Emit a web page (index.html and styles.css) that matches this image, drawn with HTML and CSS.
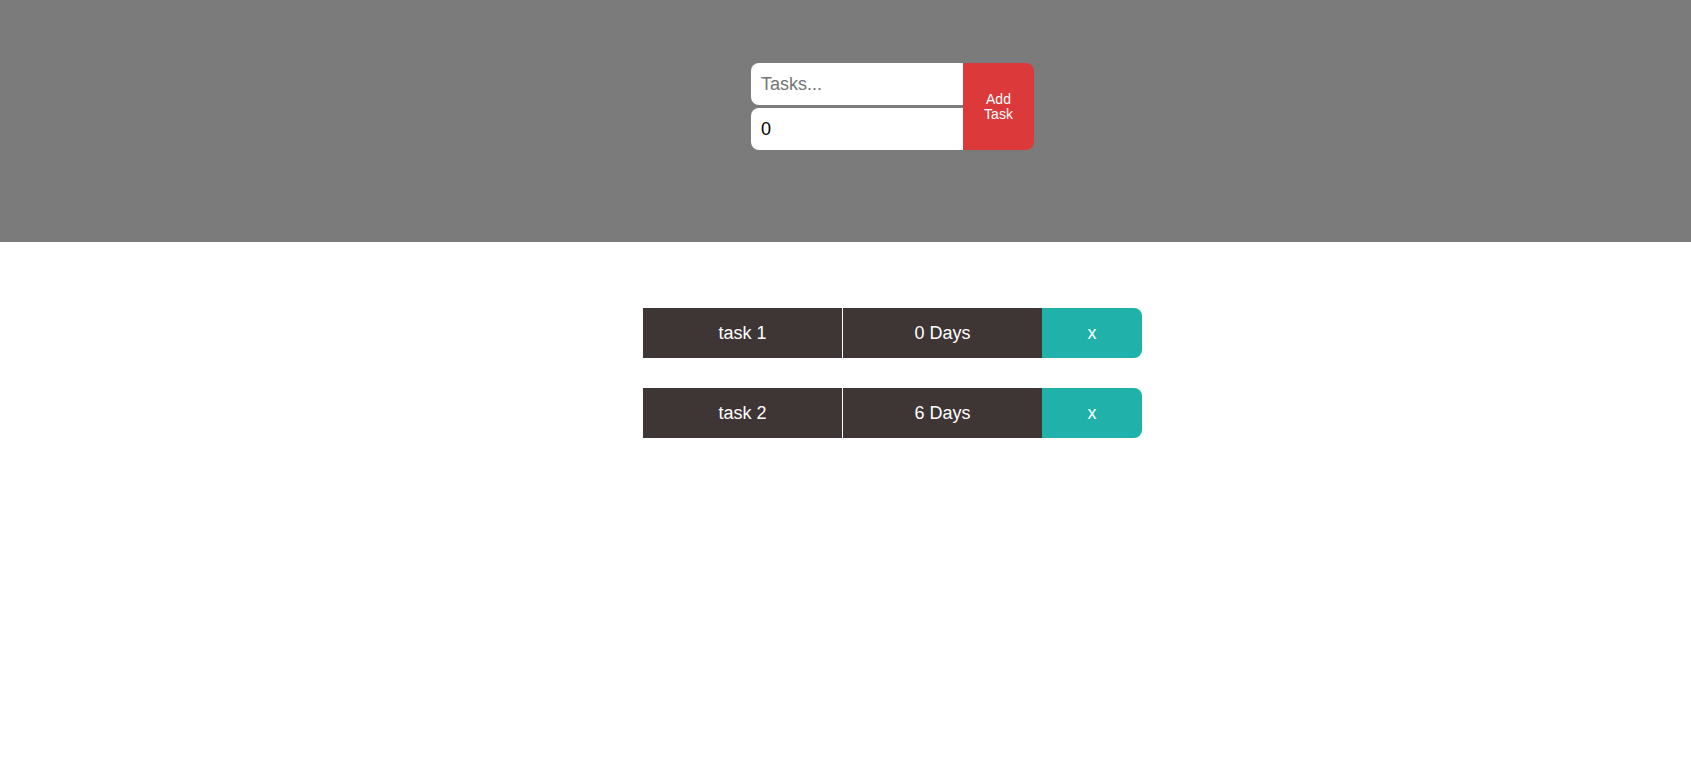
FILE: index.html
```html
<!DOCTYPE html>
<html>
<head>
<meta charset="utf-8">
<link rel="stylesheet" href="styles.css">
</head>
<body>
<header class="top">
  <form class="add-form">
    <div class="fields">
      <input class="field" type="text" placeholder="Tasks...">
      <input class="field" type="text" value="0">
    </div>
    <button class="add-btn" type="button">Add<br>Task</button>
  </form>
</header>
<main class="list">
  <div class="row">
    <div class="cell">task 1</div>
    <div class="cell">0 Days</div>
    <button class="del" type="button">x</button>
  </div>
  <div class="row">
    <div class="cell">task 2</div>
    <div class="cell">6 Days</div>
    <button class="del" type="button">x</button>
  </div>
</main>
</body>
</html>
```
FILE: styles.css
```css
html, body {
  margin: 0;
  padding: 0;
  background: #ffffff;
  font-family: "Liberation Sans", Arial, sans-serif;
}
.top {
  background: #7b7b7b;
  height: 242px;
  box-sizing: border-box;
  padding-top: 63px;
  padding-left: 94px;
  display: flex;
  justify-content: center;
  align-items: flex-start;
}
.add-form {
  display: flex;
  margin: 0;
}
.fields {
  display: flex;
  flex-direction: column;
  gap: 3px;
  width: 212px;
}
.field {
  height: 42px;
  box-sizing: border-box;
  border: none;
  border-radius: 8px 0 0 8px;
  padding: 0 10px;
  font-family: "Liberation Sans", Arial, sans-serif;
  font-size: 18px;
  color: #000;
  background: #fff;
  outline: none;
  width: 100%;
}
.field::placeholder {
  color: #757575;
}
.add-btn {
  width: 71px;
  height: 87px;
  border: none;
  border-radius: 0 8px 8px 0;
  background: #dc3a3a;
  color: #fff;
  font-family: "Liberation Sans", Arial, sans-serif;
  font-size: 14px;
  line-height: 15px;
  padding: 0;
}
.list {
  padding-top: 66px;
  padding-left: 94px;
  display: flex;
  flex-direction: column;
  align-items: center;
  gap: 30px;
}
.row {
  display: flex;
  width: 499px;
  height: 50px;
}
.cell {
  width: 199px;
  background: #3e3535;
  color: #fff;
  font-size: 18px;
  display: flex;
  align-items: center;
  justify-content: center;
}
.cell + .cell {
  margin-left: 1px;
}
.del {
  width: 100px;
  border: none;
  background: #20b2aa;
  color: #fff;
  font-family: "Liberation Sans", Arial, sans-serif;
  font-size: 18px;
  border-radius: 0 8px 8px 0;
  padding: 0;
}
```
